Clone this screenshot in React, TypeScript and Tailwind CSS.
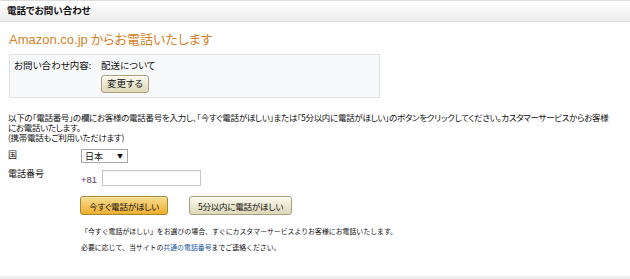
import React from "react";

const jp = "font-['Noto_Sans_CJK_JP','Noto_Sans',sans-serif]";

export default function App() {
  return (
    <div className={`relative h-[279px] w-[630px] overflow-hidden bg-white text-[#111] ${jp}`}>
      {/* 見出しバー */}
      <div className="flex h-[22px] items-center border-y border-[#dddddd] bg-gradient-to-b from-white to-[#ededed] pl-[7px]">
        <span className="text-[9.5px] font-bold leading-none [font-feature-settings:'palt']">電話でお問い合わせ</span>
      </div>

      <div className="px-[8px]">
        {/* タイトル */}
        <h1 className="mt-[9px] pl-[1px] text-[13px] leading-[16px] text-[#d4822a] [font-feature-settings:'palt']">
          <span className="font-['Liberation_Sans',sans-serif]">Amazon.co.jp</span> からお電話いたします
        </h1>

        {/* お問い合わせ内容 */}
        <div className="mt-[6px] ml-[1px] h-[44px] w-[371px] border border-[#e3e3e3] bg-[#f7f8fa] pl-[4px] pt-[4px] text-[9.5px] [font-feature-settings:'palt']">
          <div className="flex leading-[12px]">
            <span className="w-[87px]">お問い合わせ内容:</span>
            <span>配送について</span>
          </div>
          <div className="mt-[4px] pl-[87px]">
            <button className="h-[18px] w-[48px] rounded-[3px] border border-[#a8a07c] bg-gradient-to-b from-[#fbfaef] to-[#ddd8b8] text-[9.5px] leading-none shadow-[inset_0_1px_0_#fff]">
              変更する
            </button>
          </div>
        </div>

        {/* 説明 */}
        <div className="mt-[14px] text-[8.5px] leading-[10px] tracking-[-0.3px] [font-feature-settings:'palt']">
          <p className="whitespace-nowrap">
            以下の「電話番号」の欄にお客様の電話番号を入力し、「今すぐ電話がほしい」または「5分以内に電話がほしい」のボタンをクリックしてください。カスタマーサービスからお客様
          </p>
          <p>にお電話いたします。</p>
          <p>(携帯電話もご利用いただけます)</p>
        </div>

        {/* フォーム */}
        <div className="mt-[7px] grid grid-cols-[73px_1fr] items-start text-[9px] [font-feature-settings:'palt']">
          <span className="pt-[1px] leading-[10px]">国</span>
          <div className="flex h-[14px] w-[47px] items-center justify-between border border-[#a9a9a9] bg-white pl-[3px] pr-[4px] text-[9px] leading-none">
            <span>日本</span>
            <span className="text-[6px]">▼</span>
          </div>

          <span className="mt-[6px] leading-[10px]">電話番号</span>
          <div className="mt-[6px] flex items-center">
            <span className="mt-[4px] w-[21px] font-['Liberation_Sans',sans-serif] text-[9.5px] text-[#6a3a63]">+81</span>
            <div className="h-[16px] w-[99px] border border-[#c6c6c6] bg-white shadow-[inset_0_1px_1px_rgba(0,0,0,0.06)]" />
          </div>
        </div>

        {/* ボタン */}
        <div className="mt-[9px] flex gap-[21px] pl-[72px]">
          <button className="h-[19px] w-[88px] rounded-[3px] border border-[#a88734] bg-gradient-to-b from-[#f8dc8c] to-[#eeaf27] text-[8.5px] leading-none tracking-[-0.2px] [font-feature-settings:'palt'] shadow-[inset_0_1px_0_#fbe9b5]">
            今すぐ電話がほしい
          </button>
          <button className="h-[19px] w-[103px] rounded-[3px] border border-[#a8a07c] bg-gradient-to-b from-[#fbfaef] to-[#ddd8b8] text-[8.5px] leading-none tracking-[-0.2px] [font-feature-settings:'palt'] shadow-[inset_0_1px_0_#fff]">
            5分以内に電話がほしい
          </button>
        </div>

        {/* 注記 */}
        <div className="mt-[8px] pl-[73px] text-[6.9px] leading-[16px]">
          <p>「今すぐ電話がほしい」をお選びの場合、すぐにカスタマーサービスよりお客様にお電話いたします。</p>
          <p>
            必要に応じて、当サイトの<span className="text-[#1a5a9c]">共通の電話番号</span>までご連絡ください。
          </p>
        </div>
      </div>

      <div className="absolute bottom-0 left-0 h-[3px] w-full bg-[#efefef]" />
    </div>
  );
}
